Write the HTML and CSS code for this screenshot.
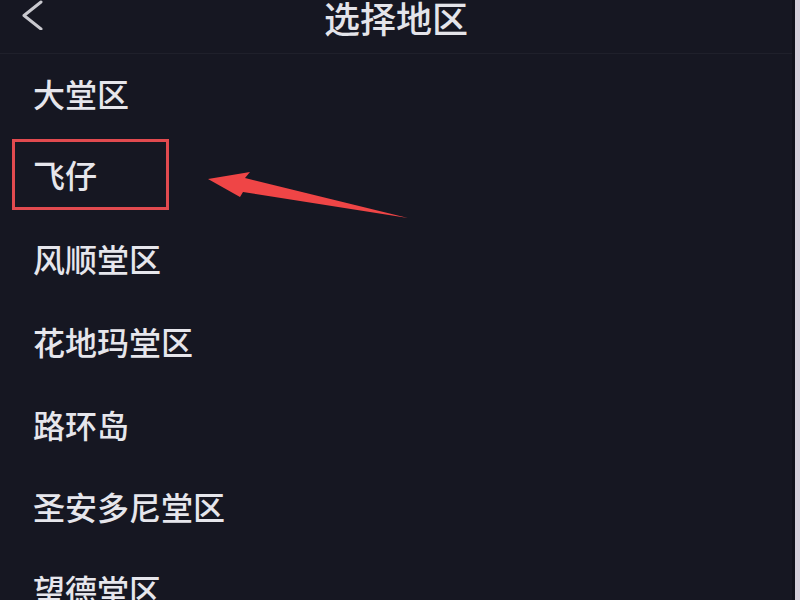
FILE: index.html
```html
<!DOCTYPE html>
<html lang="zh-CN">
<head>
    <meta charset="UTF-8">
    <meta name="viewport" content="width=device-width, initial-scale=1.0">
    <title>选择地区</title>
    <link rel="stylesheet" href="styles.css">
</head>
<body>
    <div class="screen">
        <div class="page">
            <header class="topbar">
                <a class="back" href="#">
                    <svg width="24" height="30" viewBox="0 0 24 30">
                        <path d="M20 2 L3 15.5 L20 29" fill="none" stroke="#c9c9cf" stroke-width="3" stroke-linecap="round" stroke-linejoin="round"/>
                    </svg>
                </a>
                <h1>选择地区</h1>
            </header>

            <ul class="regions">
                <li class="region">大堂区</li>
                <li class="region marked"><span class="label">飞仔</span></li>
                <li class="region">风顺堂区</li>
                <li class="region">花地玛堂区</li>
                <li class="region">路环岛</li>
                <li class="region">圣安多尼堂区</li>
                <li class="region">望德堂区</li>
            </ul>

            <!-- annotation arrow pointing at the marked row -->
            <svg class="arrow" width="220" height="60" viewBox="0 0 220 60">
                <polygon points="2,11 44,4 39,10 202,50 37,24 34,29" fill="#ef4546"/>
            </svg>
        </div>
        <div class="edge"></div>
    </div>
</body>
</html>
```

FILE: styles.css
```css
/* Global styles */
* {
    box-sizing: border-box;
}

body {
    margin: 0;
    padding: 0;
    background-color: #161722;
    font-family: "Noto Sans CJK SC", "Noto Sans", sans-serif;
    overflow: hidden;
}

.screen {
    display: flex;
    width: 800px;
    height: 600px;
}

.page {
    position: relative;
    flex: 1;
    background-color: #161722;
    border-right: 3px solid #10111a;
}

.edge {
    width: 5px;
    background-color: #d5d0db;
}

/* Header */
.topbar {
    position: relative;
    height: 54px;
    border-bottom: 1px solid #1f202b;
    display: flex;
    justify-content: center;
}

.topbar h1 {
    margin: 0;
    margin-top: -6px;
    font-size: 36px;
    font-weight: 500;
    line-height: 46px;
    color: #e4e4ea;
}

.back {
    position: absolute;
    left: 21px;
    top: 0;
    display: block;
}

.back svg {
    display: block;
}

/* Region list */
.regions {
    list-style: none;
    margin: 0;
    padding: 0;
}

.region {
    height: 82.6px;
    display: flex;
    align-items: center;
    padding-left: 33px;
    padding-bottom: 4px;
    font-size: 32px;
    font-weight: 500;
    color: #e6e6ec;
}

.region.marked {
    padding-left: 12px;
    padding-bottom: 0;
}

.region.marked .label {
    display: flex;
    align-items: center;
    width: 157px;
    height: 71px;
    margin-top: -6px;
    padding-left: 18px;
    padding-bottom: 2px;
    border: 3px solid #e24a4f;
}

/* Annotation */
.arrow {
    position: absolute;
    left: 206px;
    top: 168px;
}
```
